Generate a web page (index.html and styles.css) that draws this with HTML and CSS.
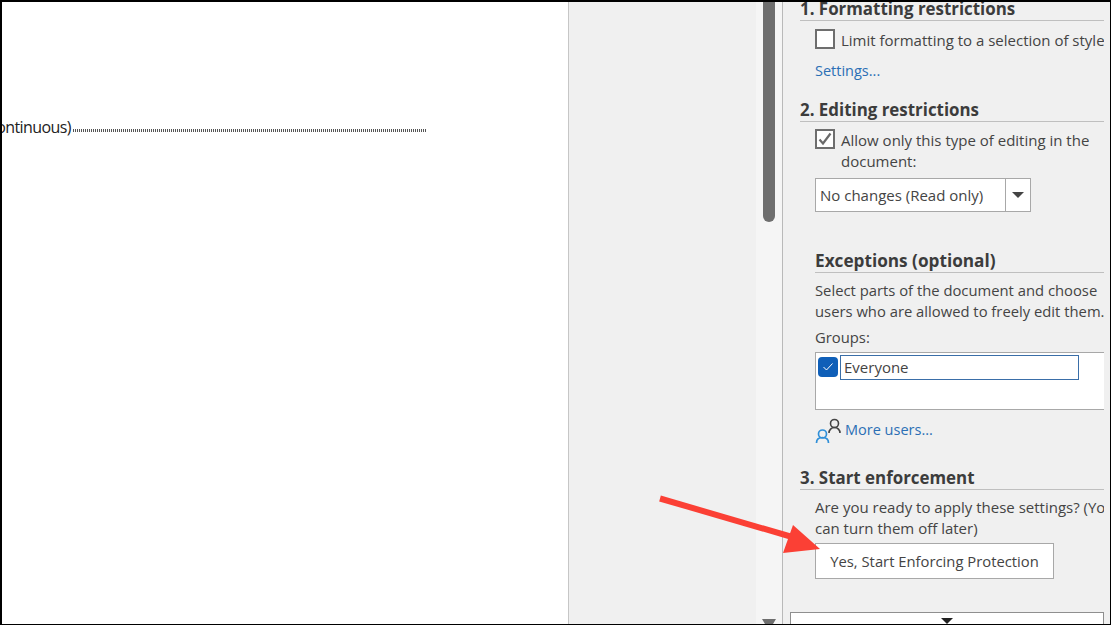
FILE: index.html
```html
<!DOCTYPE html>
<html lang="en">
<head>
<meta charset="utf-8">
<title>Restrict Editing</title>
<link rel="stylesheet" href="styles.css">
</head>
<body>
<div class="frame">
  <main class="doc">
    <div class="break-line"><span class="break-text">(Continuous)</span><span class="dots"></span></div>
  </main>
  <div class="gutter"></div>
  <div class="scrollbar">
    <div class="thumb"></div>
    <svg class="scroll-down" width="14" height="5" viewBox="0 0 14 5"><path d="M0 0h14l-3 5H3z" fill="#6e6e6e"/></svg>
  </div>
  <aside class="pane">
    <div class="pane-inner">
      <h2 class="head first">1. Formatting restrictions</h2>
      <div class="check-row one">
        <span class="box"></span>
        <span class="label">Limit formatting to a selection of styles</span>
      </div>
      <a class="link settings">Settings...</a>
      <h2 class="head second">2. Editing restrictions</h2>
      <div class="check-row two">
        <span class="box"><svg width="16" height="16" viewBox="0 0 16 16"><path d="M2.500 8.500l3.500 4 7.500-10" fill="none" stroke="#6a6a6a" stroke-width="2.200"/></svg></span>
        <span class="label wrap">Allow only this type of editing in the document:</span>
      </div>
      <div class="combo"><span class="combo-text">No changes (Read only)</span><span class="combo-btn"><i class="caret"></i></span></div>
      <h3 class="head exceptions">Exceptions (optional)</h3>
      <p class="copy ex-copy">Select parts of the document and choose users who are allowed to freely edit them.</p>
      <div class="groups-label">Groups:</div>
      <div class="groups">
        <span class="blue-check"><svg width="12" height="10" viewBox="0 0 12 10"><path d="M1.500 5l3 3 6-6.500" fill="none" stroke="#fff" stroke-width="1"/></svg></span>
        <span class="everyone">Everyone</span>
      </div>
      <div class="more">
        <svg class="users" width="26" height="26" viewBox="0 0 26 26">
          <circle cx="7.500" cy="17" r="4" fill="none" stroke="#2f8fd8" stroke-width="1.700"/>
          <path d="M1.500 26c0-3.500 2.500-5.500 6-5.500s6 2 6 5.500" fill="none" stroke="#2f8fd8" stroke-width="1.700"/>
          <circle cx="19.500" cy="6.500" r="4" fill="none" stroke="#444" stroke-width="1.600"/>
          <path d="M14 16c0-3 2.300-5.500 5.500-5.500s5.500 2.500 5.500 5.500" fill="none" stroke="#444" stroke-width="1.600"/>
        </svg>
        <a class="link">More users...</a>
      </div>
      <h2 class="head third">3. Start enforcement</h2>
      <p class="copy start-copy">Are you ready to apply these settings? (You can turn them off later)</p>
      <div class="yes">Yes, Start Enforcing Protection</div>
    </div>
    <div class="bottom-box"><i class="bottom-caret"></i></div>
  </aside>
  <svg class="arrow" width="175" height="70" viewBox="0 0 175 70">
    <path d="M1 3.500L140 44" stroke="#fb4035" stroke-width="6" fill="none"/>
    <path d="M134 30L161 54L124 58Z" fill="#fb4035"/>
  </svg>
</div>
</body>
</html>
```
FILE: styles.css
```css
* { box-sizing: border-box; }
html, body { margin: 0; padding: 0; width: 1111px; height: 625px; overflow: hidden; }
body { font-family: "Open Sans", "Noto Sans", sans-serif; color: #444; }
.frame {
  position: relative; width: 1111px; height: 625px; display: flex;
  border-top: 2px solid #000; border-left: 2px solid #000; border-bottom: 1px solid #000; border-right: 1px solid #000;
  background: #f0f0f0; overflow: hidden;
}
.doc { width: 567px; background: #fff; border-right: 1px solid #c6c6c6; flex: none; position: relative; overflow: hidden; }
.break-line { display: flex; align-items: flex-end; margin-top: 115px; margin-left: -19.400px; height: 20px; }
.break-text { font-size: 16px; line-height: 20px; color: #222; letter-spacing: -0.6px; white-space: nowrap; }
.dots {
  width: 353px; height: 3px; margin-bottom: 5px; margin-left: 2px;
  background-image: repeating-linear-gradient(90deg, #555 0 1px, transparent 1px 2px);
}
.gutter { width: 187px; flex: none; background: #f0f0f0; }
.scrollbar { width: 27px; flex: none; background: #f5f5f5; border-right: 1px solid #b9b9b9; position: relative; }
.thumb { width: 12px; height: 222px; margin-top: -2px; margin-left: 7px; background: #6e6e6e; border-radius: 0 0 6px 6px; }
.scroll-down { position: absolute; left: 6px; bottom: 0; }
.pane { flex: 1; position: relative; overflow: hidden; }
.pane-inner { width: 321px; height: 100%; padding-left: 17px; overflow: hidden; }
.head { margin: 0; font-size: 16.900px; line-height: 22px; font-weight: 700; color: #3c3c3c; border-bottom: 1px solid #bfbfbf; white-space: nowrap; }
.first { margin-top: -4px; height: 23px; }
.check-row { display: flex; margin-left: 15px; font-size: 15px; line-height: 21px; color: #444; }
.one { margin-top: 8px; }
.two { margin-top: 7px; }
.box { width: 20px; height: 20px; flex: none; background: #fff; border: 2px solid #6e6e6e; margin-right: 6px; display: flex; align-items: center; justify-content: center; }
.label { white-space: nowrap; padding-top: 1px; }
.label.wrap { white-space: normal; width: 262px; }
.link { color: #2b6fb5; font-size: 14.500px; line-height: 20px; }
.settings { display: block; margin: 10px 0 0 15px; }
.second { margin-top: 18px; height: 23px; }
.combo { margin: 6px 0 0 15px; width: 216px; height: 34px; background: #fff; border: 1px solid #a8a8a8; display: flex; align-items: center; font-size: 15px; }
.combo-text { flex: 1; padding-left: 4px; white-space: nowrap; }
.combo-btn { width: 25px; height: 32px; border-left: 1px solid #a8a8a8; display: flex; align-items: center; justify-content: center; }
.caret { width: 0; height: 0; border-left: 6px solid transparent; border-right: 6px solid transparent; border-top: 6px solid #444; }
.exceptions { margin: 38px 0 0 15px; height: 23px; font-size: 17.200px; }
.copy { margin: 0; font-size: 15px; line-height: 21px; color: #444; }
.ex-copy { margin: 7px 0 0 15px; width: 300px; font-size: 14.800px; }
.groups-label { margin: 5px 0 0 15px; font-size: 14.800px; line-height: 21px; }
.groups { margin: 4px 0 0 15px; height: 58px; background: #fff; border: 1px solid #a8a8a8; border-right: 0; display: flex; align-items: flex-start; padding: 2px; gap: 2px; }
.blue-check { width: 20px; height: 20px; margin-top: 2px; border-radius: 4px; background: #0f5fb8; display: flex; align-items: center; justify-content: center; flex: none; }
.everyone { width: 239px; height: 25px; border: 1px solid #3a6ea8; font-size: 15px; line-height: 22px; padding-left: 3px; }
.more { margin: 6px 0 0 15px; display: flex; align-items: center; height: 28px; gap: 4px; }
.third { margin-top: 23px; height: 23px; }
.start-copy { margin: 7px 0 0 15px; width: 300px; }
.yes { margin: 4px 0 0 15px; width: 239px; height: 36px; background: #fff; border: 1px solid #a8a8a8; font-size: 14.800px; display: flex; align-items: center; justify-content: center; white-space: nowrap; }
.bottom-box { position: absolute; left: 7px; top: 610px; width: 314px; height: 20px; background: #fff; border: 1px solid #8f8f8f; }
.bottom-caret { position: absolute; left: 150px; top: 5px; width: 0; height: 0; border-left: 6px solid transparent; border-right: 6px solid transparent; border-top: 6px solid #222; }
.arrow { position: absolute; left: 657px; top: 493px; }
```
